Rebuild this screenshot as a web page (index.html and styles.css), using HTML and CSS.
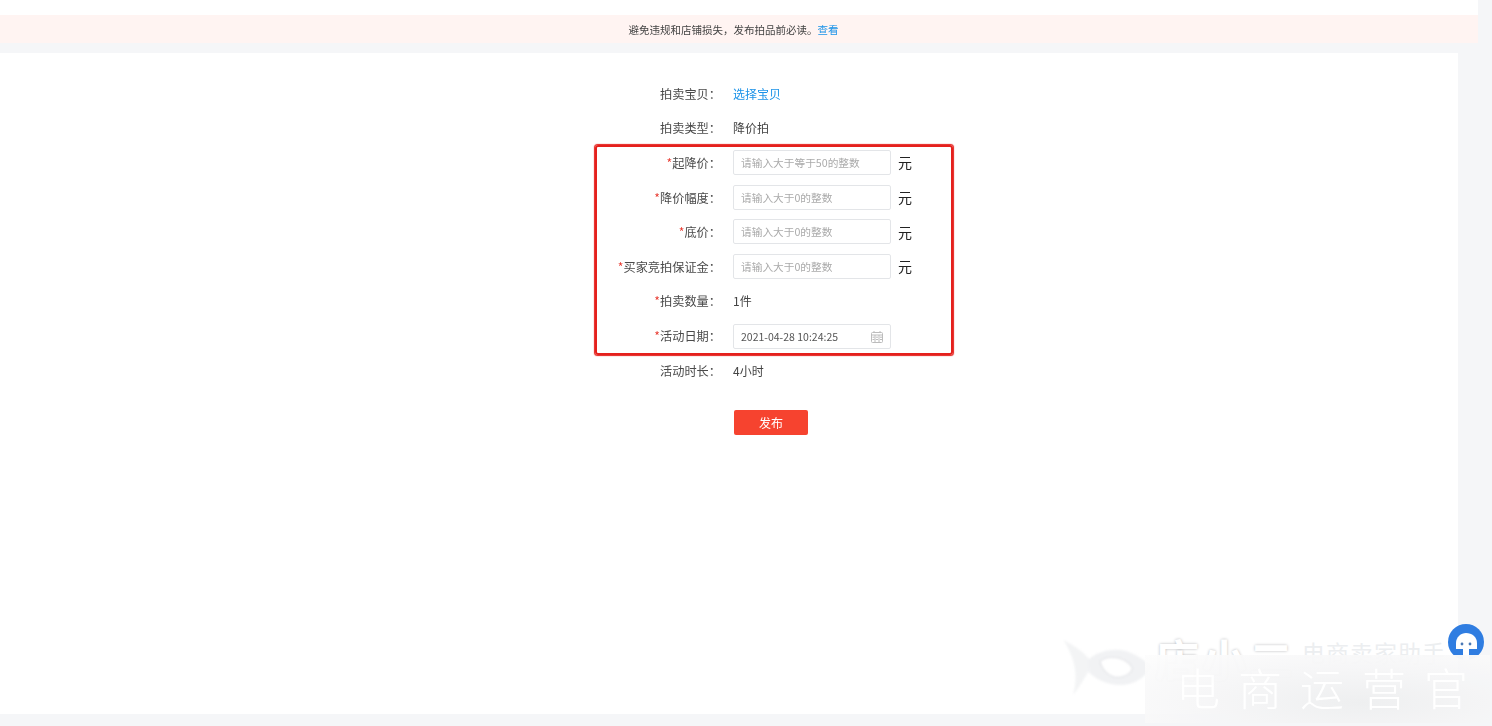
FILE: index.html
```html
<!DOCTYPE html>
<html lang="en">
<head>
  <meta charset="UTF-8" />
  <title>发布拍品</title>
  <link rel="stylesheet" href="styles.css">
</head>
<body>

  <div class="top-strip">
    <div class="notice">
      <span>避免违规和店铺损失，发布拍品前必读。</span><a class="link" href="#">查看</a>
    </div>
  </div>

  <div class="panel">
    <div class="form">
      <div class="row">
        <div class="label">拍卖宝贝：</div>
        <a class="link" href="#">选择宝贝</a>
      </div>
      <div class="row">
        <div class="label">拍卖类型：</div>
        <div>降价拍</div>
      </div>
      <div class="row">
        <div class="label"><i>*</i>起降价：</div>
        <input class="field" type="text" placeholder="请输入大于等于50的整数">
        <span class="unit">元</span>
      </div>
      <div class="row">
        <div class="label"><i>*</i>降价幅度：</div>
        <input class="field" type="text" placeholder="请输入大于0的整数">
        <span class="unit">元</span>
      </div>
      <div class="row">
        <div class="label"><i>*</i>底价：</div>
        <input class="field" type="text" placeholder="请输入大于0的整数">
        <span class="unit">元</span>
      </div>
      <div class="row">
        <div class="label"><i>*</i>买家竞拍保证金：</div>
        <input class="field" type="text" placeholder="请输入大于0的整数">
        <span class="unit">元</span>
      </div>
      <div class="row">
        <div class="label"><i>*</i>拍卖数量：</div>
        <div>1件</div>
      </div>
      <div class="row">
        <div class="label"><i>*</i>活动日期：</div>
        <div class="field date">
          <span>2021-04-28 10:24:25</span>
          <svg width="12" height="12" viewBox="0 0 12 12" fill="none" stroke="#bcbcbc" stroke-width="1">
            <rect x="0.5" y="1.5" width="11" height="10" rx="1"/>
            <path d="M0.5 4h11M4 4v7.5M8 4v7.5M1.5 6.2h2M1.5 8.5h2M5 6.2h2M5 8.5h2M9 6.2h2M9 8.5h2M3 0v2M9 0v2"/>
          </svg>
        </div>
      </div>
      <div class="row">
        <div class="label">活动时长：</div>
        <div>4小时</div>
      </div>
      <div class="actions">
        <button class="publish">发布</button>
      </div>
    </div>
    <div class="red-box"></div>
  </div>

  <!-- reposted-image watermark -->
  <div class="mark">
    <svg class="fish" width="110" height="75" viewBox="0 0 330 225">
      <path fill="#f3f4f5" d="M25 30C55 45 85 65 105 90L100 125C85 150 70 175 55 195 65 150 70 100 25 30z"/>
      <path fill="#f1f2f4" fill-rule="evenodd" d="M100 90C130 60 190 50 230 70 255 82 275 95 288 110 270 145 230 168 190 165 150 162 120 145 100 125zM135 95C150 78 190 78 215 95 225 102 232 110 232 118 225 135 200 145 180 142 160 138 140 118 135 95z"/>
      <path fill="none" stroke="#e6e7ea" stroke-width="4" d="M135 95C150 78 190 78 215 95 225 102 232 110 232 118 225 135 200 145 180 142 160 138 140 118 135 95z"/>
    </svg>
    <div class="mark-name">店小二</div>
    <div class="mark-sub">电商卖家助手</div>
  </div>
  <div class="chat">
    <svg width="36" height="36" viewBox="0 0 36 36">
      <circle cx="18" cy="18" r="18" fill="#2f7de1"/>
      <path fill="#fff" d="M8 25V19C8 13 13 9 18 9 24 9 29 13 29 19V25z"/>
      <path fill="#fff" d="M15 25h6v11h-6z"/>
      <circle cx="14" cy="20" r="1.4" fill="#4a78b5"/>
      <circle cx="22" cy="20" r="1.4" fill="#4a78b5"/>
    </svg>
  </div>
  <div class="stamp">电商运营官</div>

</body>
</html>
```

FILE: styles.css
```css
html, body {
  height: 100%;
}
body {
  margin: 0;
  width: 1492px;
  height: 726px;
  overflow: hidden;
  position: relative;
  background: #f5f6f8;
  font-family: "Noto Sans CJK SC", "Liberation Sans", sans-serif;
  font-size: 12px;
  color: #444;
}
a {
  text-decoration: none;
}
.link {
  color: #1b92e8;
}
.top-strip {
  width: 1478px;
  height: 43px;
  padding-top: 15px;
  box-sizing: border-box;
  background: #fff;
}
.notice {
  height: 28px;
  line-height: 29px;
  box-sizing: border-box;
  padding-right: 11px;
  text-align: center;
  font-size: 10.5px;
  background: #fff4f2;
  color: #444;
  filter: blur(0.3px);
}
.panel {
  position: relative;
  width: 1458px;
  height: 661px;
  margin-top: 10px;
  background: #fff;
  box-sizing: border-box;
  padding-top: 23px;
}
.form {
  display: flex;
  flex-direction: column;
  filter: blur(0.3px);
}
.row {
  display: flex;
  align-items: center;
  height: 34.6px;
}
.label {
  flex: none;
  width: 721px;
  margin-right: 12px;
  padding-top: 1px;
  text-align: right;
  font-size: 12.2px;
  color: #4a4a4a;
}
.label i {
  color: #e8392f;
  font-style: normal;
}
.field {
  width: 158px;
  height: 25px;
  box-sizing: border-box;
  border: 1px solid #e3e5e8;
  border-radius: 2px;
  padding: 0 7px;
  font: inherit;
  font-size: 10.7px;
  color: #555;
  background: #fff;
  outline: none;
}
.field::placeholder {
  color: #aaa;
}
.date {
  display: flex;
  align-items: center;
  justify-content: space-between;
  margin-top: 3px;
  font-size: 10.5px;
}
.unit {
  margin-left: 7px;
  font-size: 14px;
  color: #222;
}
.actions {
  padding: 23px 0 0 734px;
}
.publish {
  display: block;
  width: 74px;
  height: 25px;
  border: none;
  border-radius: 2px;
  background: #f6432f;
  color: #fff;
  font: inherit;
  cursor: pointer;
}
.red-box {
  position: absolute;
  left: 595px;
  top: 92px;
  width: 358px;
  height: 210px;
  box-sizing: border-box;
  border: 2px solid #e5201c;
  border-radius: 3px;
  box-shadow: 0 0 1px 0.5px #e5201c;
}
.mark {
  position: absolute;
  left: 1055px;
  top: 630px;
  width: 400px;
  height: 75px;
}
.fish {
  position: absolute;
  left: 0;
  top: 0;
  filter: blur(0.8px);
}
.mark-name {
  position: absolute;
  left: 100px;
  top: 0;
  font-size: 44px;
  letter-spacing: 3px;
  font-weight: 700;
  line-height: 56px;
  color: #fff;
  text-shadow: 0 0 3px #b8b9bc;
}
.mark-sub {
  position: absolute;
  left: 247px;
  top: 7px;
  font-size: 23px;
  letter-spacing: 1px;
  line-height: 30px;
  color: #eceef0;
}
.stamp {
  position: absolute;
  left: 1145px;
  top: 655px;
  width: 345px;
  height: 68px;
  box-sizing: border-box;
  padding-left: 31px;
  line-height: 64px;
  font-size: 44px;
  letter-spacing: 18px;
  font-weight: 300;
  white-space: nowrap;
  color: #fff;
  background: radial-gradient(ellipse at 62% 70%, #eeeff0 0%, #f6f6f7 50%, #fdfdfd 100%);
  opacity: 0.97;
}
.chat {
  position: absolute;
  left: 1448px;
  top: 624px;
  width: 36px;
  height: 36px;
}
.chat svg {
  display: block;
}
```
